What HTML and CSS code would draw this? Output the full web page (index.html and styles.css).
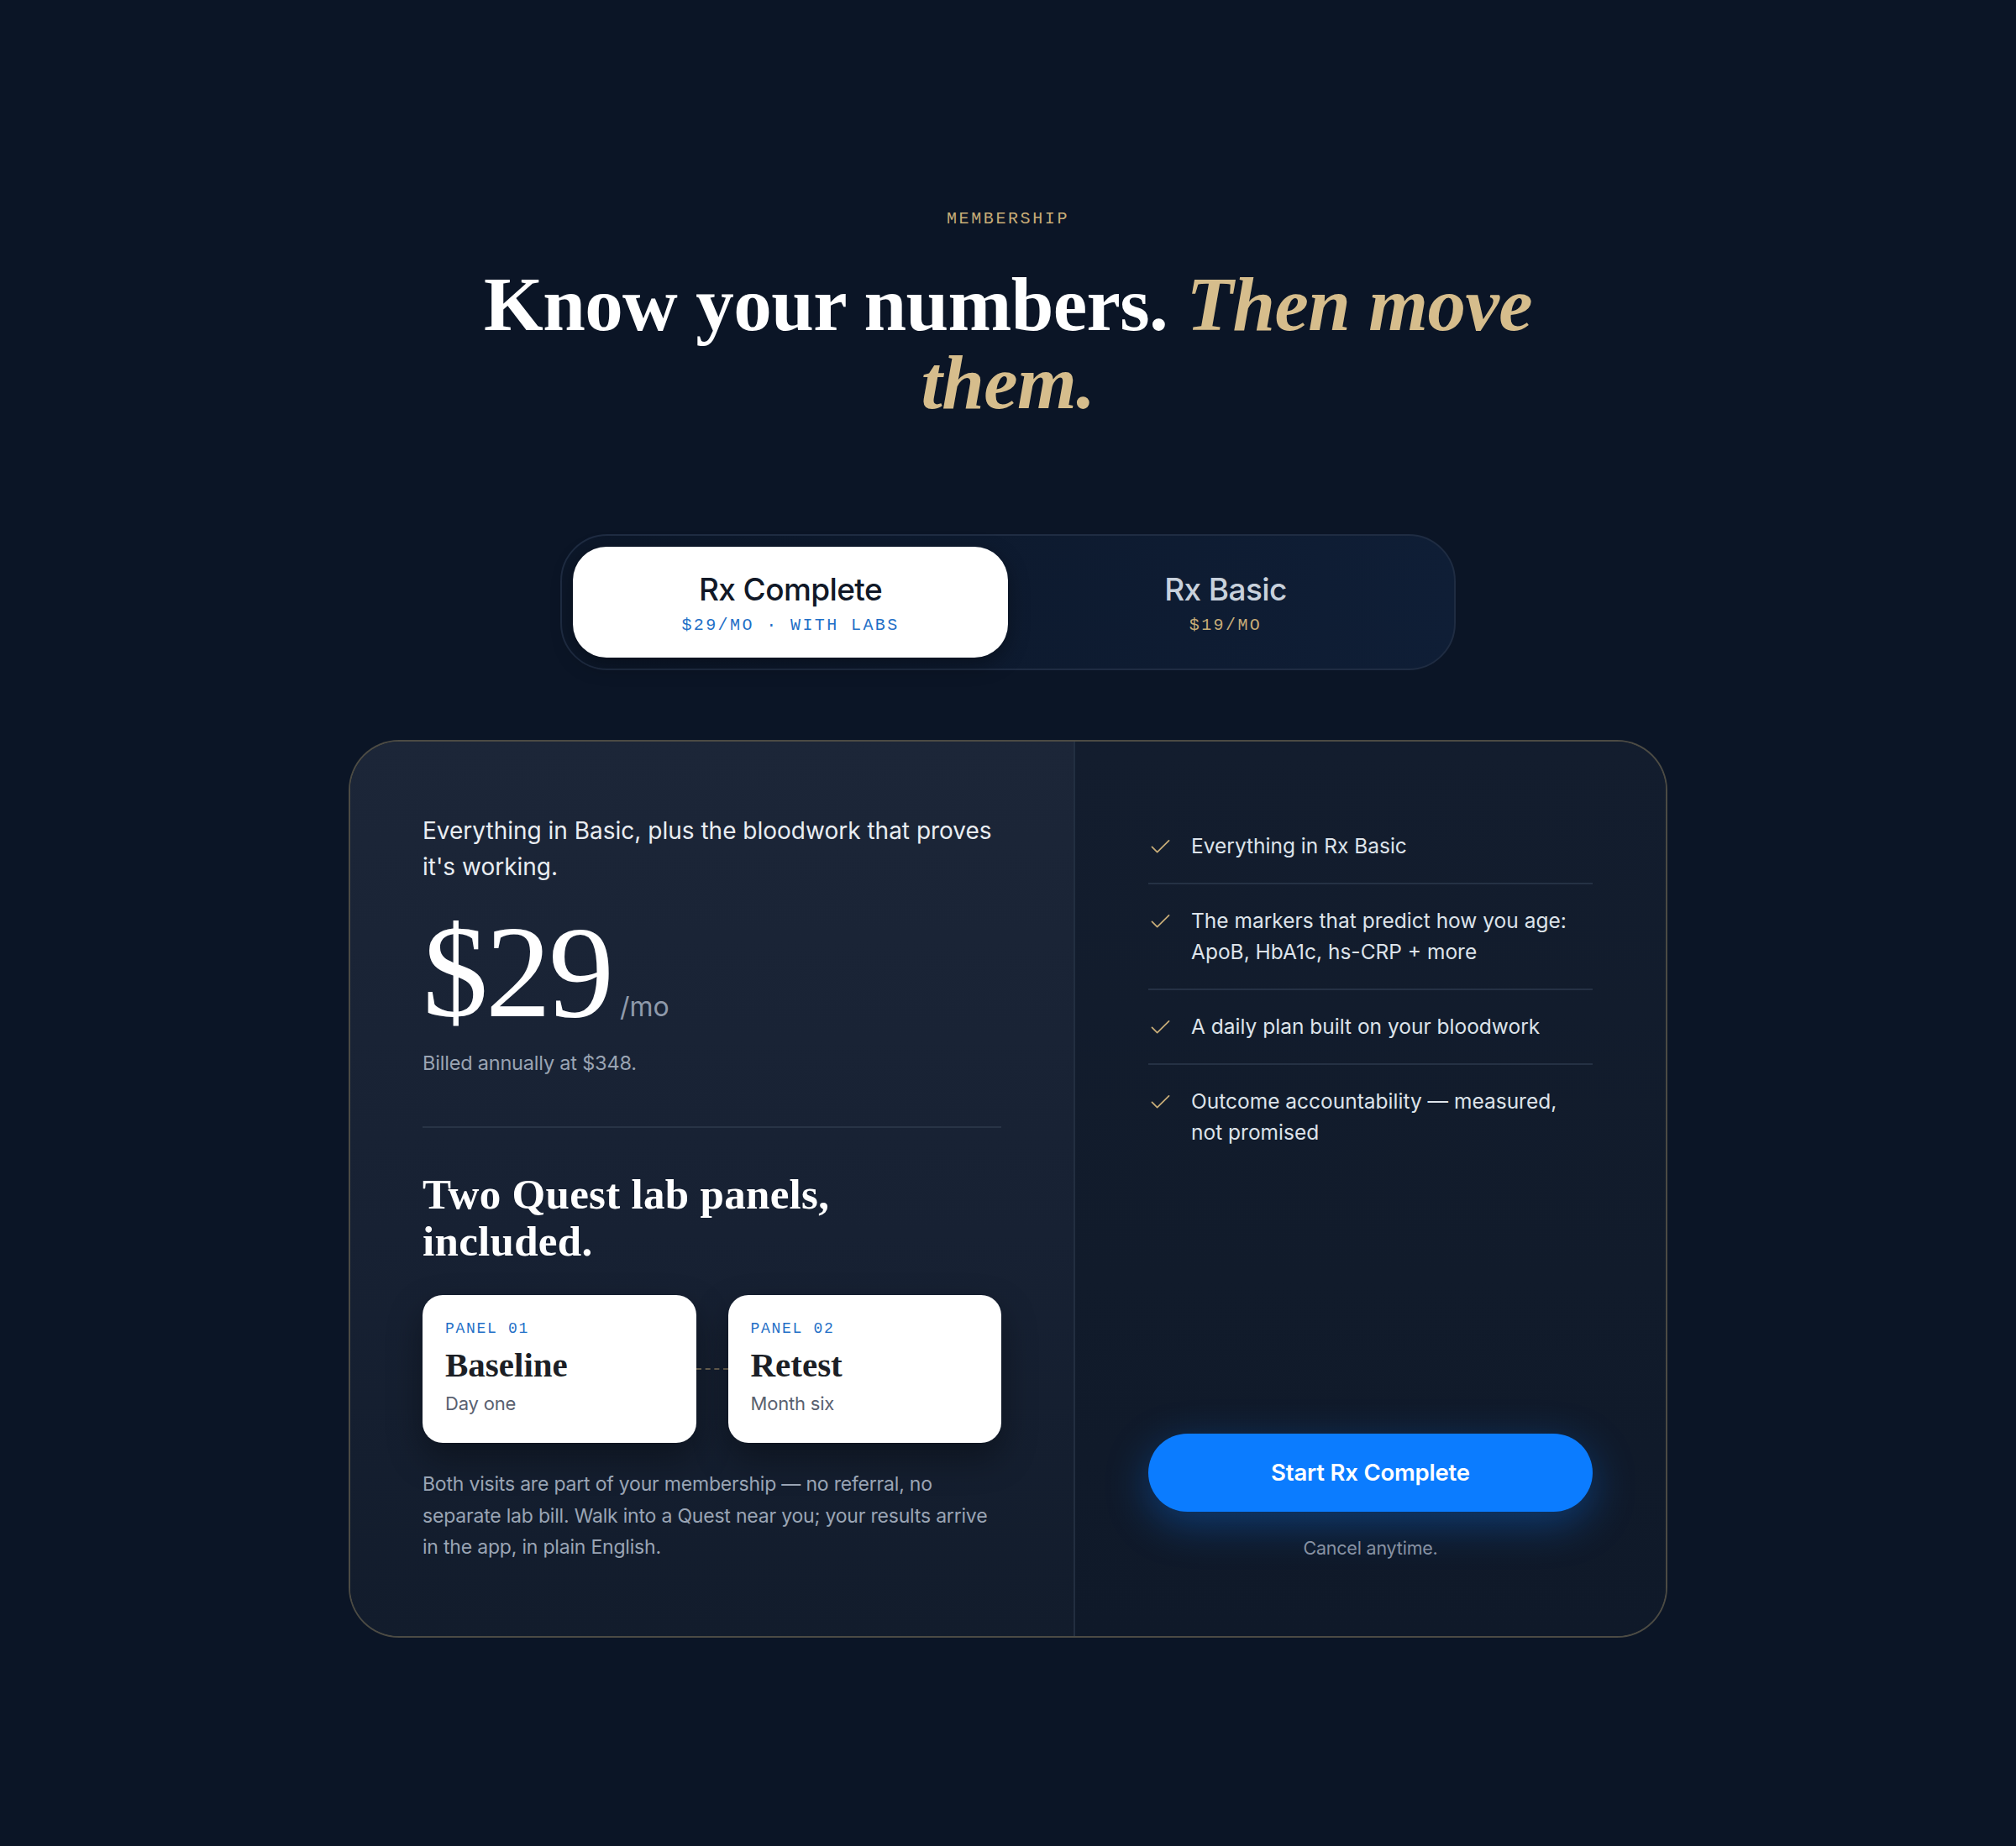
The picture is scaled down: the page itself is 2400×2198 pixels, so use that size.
FILE: index.html
```html
<!DOCTYPE html>
<html lang="en">
<head>
<meta charset="utf-8">
<title>Membership</title>
<link rel="stylesheet" href="styles.css">
</head>
<body>
<main class="pricing">
  <p class="eyebrow">MEMBERSHIP</p>
  <h1 class="headline">Know your numbers. <em>Then move them.</em></h1>

  <div class="toggle">
    <button class="tab tab-active">
      <span class="tab-name">Rx Complete</span>
      <span class="tab-meta">$29/MO · WITH LABS</span>
    </button>
    <button class="tab">
      <span class="tab-name">Rx Basic</span>
      <span class="tab-meta">$19/MO</span>
    </button>
  </div>

  <section class="plan">
    <div class="plan-main">
      <p class="lede">Everything in Basic, plus the bloodwork that proves it's working.</p>
      <div class="price"><span class="amount">$29</span><span class="per">/mo</span></div>
      <p class="billed">Billed annually at $348.</p>
      <hr class="rule">
      <h2 class="labs-title">Two Quest lab panels, included.</h2>
      <div class="panels">
        <div class="panel">
          <span class="panel-tag">PANEL 01</span>
          <span class="panel-name">Baseline</span>
          <span class="panel-when">Day one</span>
        </div>
        <div class="panel-link"></div>
        <div class="panel">
          <span class="panel-tag">PANEL 02</span>
          <span class="panel-name">Retest</span>
          <span class="panel-when">Month six</span>
        </div>
      </div>
      <p class="note">Both visits are part of your membership — no referral, no separate lab bill. Walk into a Quest near you; your results arrive in the app, in plain English.</p>
    </div>

    <div class="plan-side">
      <ul class="features">
        <li class="feature"><svg class="check" viewBox="0 0 24 18" aria-hidden="true"><polyline points="1.5,9.5 8,16 22.5,1.5"/></svg><span>Everything in Rx Basic</span></li>
        <li class="feature"><svg class="check" viewBox="0 0 24 18" aria-hidden="true"><polyline points="1.5,9.5 8,16 22.5,1.5"/></svg><span>The markers that predict how you age: ApoB, HbA1c, hs-CRP + more</span></li>
        <li class="feature"><svg class="check" viewBox="0 0 24 18" aria-hidden="true"><polyline points="1.5,9.5 8,16 22.5,1.5"/></svg><span>A daily plan built on your bloodwork</span></li>
        <li class="feature"><svg class="check" viewBox="0 0 24 18" aria-hidden="true"><polyline points="1.5,9.5 8,16 22.5,1.5"/></svg><span>Outcome accountability — measured, not promised</span></li>
      </ul>
      <div class="cta">
        <button class="cta-button">Start Rx Complete</button>
        <p class="cta-note">Cancel anytime.</p>
      </div>
    </div>
  </section>
</main>
</body>
</html>
```
FILE: styles.css
```css
* { box-sizing: border-box; }

html, body {
  margin: 0;
  padding: 0;
}

body {
  background: #0b1526;
  min-height: 2198px;
  font-family: "Inter", "Liberation Sans", sans-serif;
  color: #e6eaf0;
}

.pricing {
  display: flex;
  flex-direction: column;
  align-items: center;
  padding-top: 240px;
  padding-bottom: 248px;
}

.eyebrow {
  margin: 0;
  font-family: "Liberation Mono", "DejaVu Sans Mono", monospace;
  font-size: 20px;
  line-height: 42px;
  letter-spacing: 2.6px;
  color: #c8ad78;
}

.headline {
  margin: 34px 0 0;
  max-width: 1340px;
  text-align: center;
  font-family: "Liberation Serif", "DejaVu Serif", serif;
  font-weight: 700;
  font-size: 91px;
  line-height: 93px;
  letter-spacing: -0.6px;
  color: #ffffff;
}

.headline em {
  font-style: italic;
  color: #d6bd8c;
}

/* toggle */
.toggle {
  margin-top: 134px;
  width: 1066px;
  height: 162px;
  display: grid;
  grid-template-columns: 1fr 1fr;
  padding: 13px;
  border: 2px solid #1f2c42;
  border-radius: 56px;
  background: linear-gradient(90deg, #0c1729 0%, #0f1e36 100%);
}

.tab {
  border: 0;
  background: transparent;
  border-radius: 40px;
  display: flex;
  flex-direction: column;
  align-items: center;
  justify-content: center;
  gap: 8px;
  padding-top: 5px;
  font: inherit;
  cursor: pointer;
}

.tab-active {
  background: #ffffff;
  box-shadow: 0 8px 24px rgba(0, 0, 0, 0.35);
}

.tab-name {
  font-size: 37px;
  line-height: 44px;
  font-weight: 500;
  letter-spacing: -0.6px;
  color: #c8d1dc;
}

.tab-active .tab-name { color: #111827; }

.tab-meta {
  font-family: "Liberation Mono", "DejaVu Sans Mono", monospace;
  font-size: 20px;
  line-height: 26px;
  letter-spacing: 2.4px;
  color: #c8ad78;
}

.tab-active .tab-meta { color: #1f6fc7; }

/* plan card */
.plan {
  margin-top: 83px;
  width: 1570px;
  display: grid;
  grid-template-columns: 863px 1fr;
  border: 2px solid rgba(201, 176, 122, 0.32);
  border-radius: 60px;
  overflow: hidden;
  background: #111b2b;
}

.plan-main {
  padding: 85px 86px 86px 86px;
  background: linear-gradient(180deg, #1c2638 0%, #172133 55%, #121c2c 100%);
  border-right: 2px solid #222e40;
}

.lede {
  margin: 0;
  font-size: 28px;
  line-height: 43px;
  letter-spacing: 0;
  color: #e9edf2;
}

.price {
  margin-top: 28px;
  display: flex;
  align-items: baseline;
  gap: 10px;
}

.amount {
  font-family: "Liberation Serif", "DejaVu Serif", serif;
  font-size: 156px;
  line-height: 152px;
  letter-spacing: -3px;
  color: #ffffff;
}

.per {
  font-size: 32px;
  color: #8f9aab;
}

.billed {
  margin: 15px 0 0;
  font-size: 23.5px;
  line-height: 34px;
  color: #9aa4b3;
  letter-spacing: -0.2px;
}

.rule {
  margin: 58px 0 0;
  border: 0;
  border-top: 2px solid #283446;
}

.labs-title {
  margin: 51px 0 0;
  font-family: "Liberation Serif", "DejaVu Serif", serif;
  font-weight: 700;
  font-size: 51px;
  line-height: 56px;
  letter-spacing: 0.3px;
  color: #ffffff;
  max-width: 560px;
}

.panels {
  margin-top: 36px;
  display: grid;
  grid-template-columns: 1fr 38px 1fr;
  align-items: center;
}

.panel {
  height: 176px;
  background: #ffffff;
  border-radius: 24px;
  padding: 28px 27px 0;
  display: flex;
  flex-direction: column;
  box-shadow: 0 18px 40px rgba(0, 0, 0, 0.35);
}

.panel-link {
  border-top: 2px dashed rgba(201, 176, 122, 0.45);
}

.panel-tag {
  font-family: "Liberation Mono", "DejaVu Sans Mono", monospace;
  font-size: 18px;
  line-height: 24px;
  letter-spacing: 1.7px;
  color: #1f6fc7;
}

.panel-name {
  margin-top: 8px;
  font-family: "Liberation Serif", "DejaVu Serif", serif;
  font-weight: 700;
  font-size: 41px;
  line-height: 46px;
  color: #1c1f26;
}

.panel-when {
  margin-top: 8px;
  font-size: 22px;
  line-height: 30px;
  color: #5a6170;
  letter-spacing: -0.2px;
}

.note {
  margin: 31px 0 0;
  font-size: 23px;
  line-height: 37.5px;
  letter-spacing: -0.2px;
  color: #9aa5b5;
}

/* side */
.plan-side {
  padding: 84px 87px 90px 87px;
  display: flex;
  flex-direction: column;
  background: linear-gradient(180deg, #131d2e 0%, #111b2b 60%, #0f1929 100%);
}

.features {
  list-style: none;
  margin: 0;
  padding: 0;
}

.feature {
  display: flex;
  align-items: flex-start;
  gap: 25px;
  padding: 25px 0;
  border-bottom: 2px solid #253144;
  font-size: 24.5px;
  line-height: 37px;
  letter-spacing: 0;
  color: #dde3ea;
}

.feature:first-child { padding-top: 22px; }
.feature:last-child { border-bottom: 0; }

.check {
  flex: none;
  width: 23px;
  height: 18px;
  margin-top: 10px;
  margin-left: 3px;
  fill: none;
  stroke: #c8ad78;
  stroke-width: 1.8;
  stroke-linecap: round;
  stroke-linejoin: round;
}

.cta {
  margin-top: auto;
  display: flex;
  flex-direction: column;
  align-items: center;
}

.cta-button {
  width: 100%;
  height: 93px;
  border: 0;
  border-radius: 47px;
  background: #0b7cff;
  color: #ffffff;
  font: inherit;
  font-size: 27.5px;
  font-weight: 600;
  letter-spacing: -0.2px;
  box-shadow: 0 14px 50px rgba(11, 124, 255, 0.35);
  cursor: pointer;
}

.cta-note {
  margin: 28px 0 0;
  font-size: 21.5px;
  line-height: 30px;
  color: #8792a3;
  letter-spacing: -0.2px;
}
```
